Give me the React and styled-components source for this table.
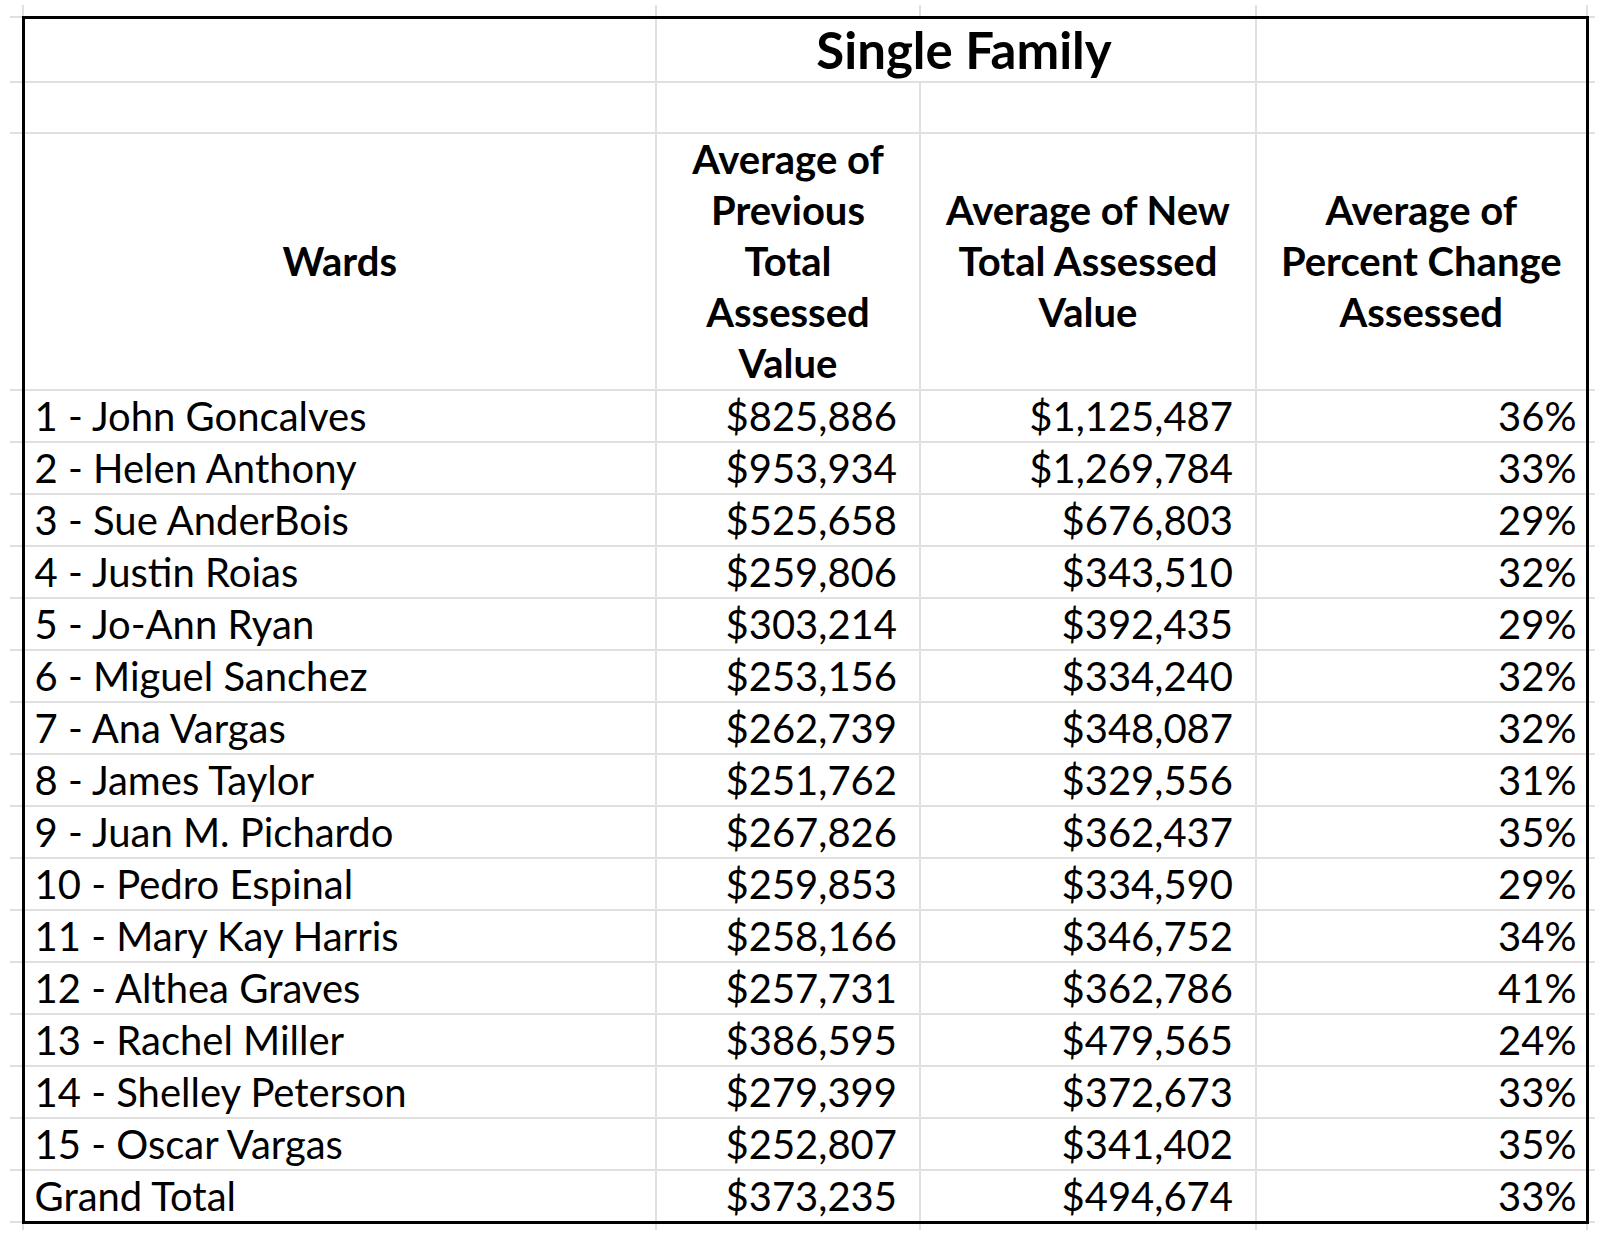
import React from "react";
import styled, { createGlobalStyle } from "styled-components";

const GRID = "2px solid #e0e0e0";
const EDGE = "3px solid #000";

const wards = [
  ["1 - John Goncalves", "$825,886", "$1,125,487", "36%"],
  ["2 - Helen Anthony", "$953,934", "$1,269,784", "33%"],
  ["3 - Sue AnderBois", "$525,658", "$676,803", "29%"],
  ["4 - Justin Roias", "$259,806", "$343,510", "32%"],
  ["5 - Jo-Ann Ryan", "$303,214", "$392,435", "29%"],
  ["6 - Miguel Sanchez", "$253,156", "$334,240", "32%"],
  ["7 - Ana Vargas", "$262,739", "$348,087", "32%"],
  ["8 - James Taylor", "$251,762", "$329,556", "31%"],
  ["9 - Juan M. Pichardo", "$267,826", "$362,437", "35%"],
  ["10 - Pedro Espinal", "$259,853", "$334,590", "29%"],
  ["11 - Mary Kay Harris", "$258,166", "$346,752", "34%"],
  ["12 - Althea Graves", "$257,731", "$362,786", "41%"],
  ["13 - Rachel Miller", "$386,595", "$479,565", "24%"],
  ["14 - Shelley Peterson", "$279,399", "$372,673", "33%"],
  ["15 - Oscar Vargas", "$252,807", "$341,402", "35%"],
  ["Grand Total", "$373,235", "$494,674", "33%"],
];

const GlobalStyle = createGlobalStyle`
  html, body {
    margin: 0;
    background: #fff;
  }
  body {
    font-family: Lato, "Liberation Sans", sans-serif;
  }
`;

const Page = styled.div`
  padding: 5px 0 0 10px;
`;

const Sheet = styled.table`
  border-collapse: collapse;
  table-layout: fixed;
  width: 1585px;
  font-family: Lato, "Liberation Sans", sans-serif;
  font-size: 40px;
  color: #000;
`;

const Col = styled.col`
  width: ${(p) => p.$w}px;
`;

const Row = styled.tr`
  height: ${(p) => p.$h}px;
`;

const Cell = styled.td`
  border: ${GRID};
  padding: 0 ${(p) => p.$pr || 0}px 0 ${(p) => p.$pl || 0}px;
  text-align: ${(p) => p.$align || "left"};
  font-weight: ${(p) => (p.$bold ? 700 : 400)};
  white-space: nowrap;
  overflow: hidden;
  vertical-align: middle;
  line-height: 1;
  ${(p) => p.$top && `border-top: ${EDGE};`}
  ${(p) => p.$bottom && `border-bottom: ${EDGE};`}
  ${(p) => p.$left && `border-left: ${EDGE};`}
  ${(p) => p.$right && `border-right: ${EDGE};`}
`;

// cells outside the framed range: only the gridlines that run into them
const Stub = styled.td`
  border: ${GRID};
  padding: 0;
  ${(p) => p.$noTop && "border-top: none;"}
  ${(p) => p.$noBottom && "border-bottom: none;"}
  ${(p) => p.$noLeft && "border-left: none;"}
  ${(p) => p.$noRight && "border-right: none;"}
`;

const Title = styled(Cell)`
  font-size: 51px;
  text-align: center;
  padding-left: 16px;
`;

const Heading = styled(Cell)`
  text-align: center;
  line-height: 51px;
  font-weight: 700;
`;

const App = () => {
  return (
    <Page>
      <GlobalStyle />
      <Sheet>
        <colgroup>
          <Col $w={13} />
          <Col $w={633} />
          <Col $w={264} />
          <Col $w={336} />
          <Col $w={331} />
          <Col $w={8} />
        </colgroup>
        <tbody>
          <Row $h={12}>
            <Stub $noTop $noLeft />
            <Stub $noTop />
            <Stub $noTop />
            <Stub $noTop />
            <Stub $noTop />
            <Stub $noTop $noRight />
          </Row>
          <Row $h={65}>
            <Stub $noLeft />
            <Cell $top $left />
            <Title $top $bold colSpan={2}>
              Single Family
            </Title>
            <Cell $top $right />
            <Stub $noRight />
          </Row>
          <Row $h={51}>
            <Stub $noLeft />
            <Cell $left />
            <Cell />
            <Cell />
            <Cell $right />
            <Stub $noRight />
          </Row>
          <Row $h={257}>
            <Stub $noLeft />
            <Heading $left>Wards</Heading>
            <Heading>
              Average of
              <br />
              Previous
              <br />
              Total
              <br />
              Assessed
              <br />
              Value
            </Heading>
            <Heading>
              Average of New
              <br />
              Total Assessed
              <br />
              Value
            </Heading>
            <Heading $right>
              Average of
              <br />
              Percent Change
              <br />
              Assessed
            </Heading>
            <Stub $noRight />
          </Row>
          {wards.map((w, i) => {
            const last = i === wards.length - 1;
            return (
              <Row $h={52} key={w[0]}>
                <Stub $noLeft />
                <Cell $left $bottom={last} $pl={10}>
                  {w[0]}
                </Cell>
                <Cell $align='right' $pr={22} $bottom={last}>
                  {w[1]}
                </Cell>
                <Cell $align='right' $pr={22} $bottom={last}>
                  {w[2]}
                </Cell>
                <Cell $align='right' $pr={9} $right $bottom={last}>
                  {w[3]}
                </Cell>
                <Stub $noRight />
              </Row>
            );
          })}
          <Row $h={8}>
            <Stub $noBottom $noLeft />
            <Stub $noBottom />
            <Stub $noBottom />
            <Stub $noBottom />
            <Stub $noBottom />
            <Stub $noBottom $noRight />
          </Row>
        </tbody>
      </Sheet>
    </Page>
  );
};

export default App;
